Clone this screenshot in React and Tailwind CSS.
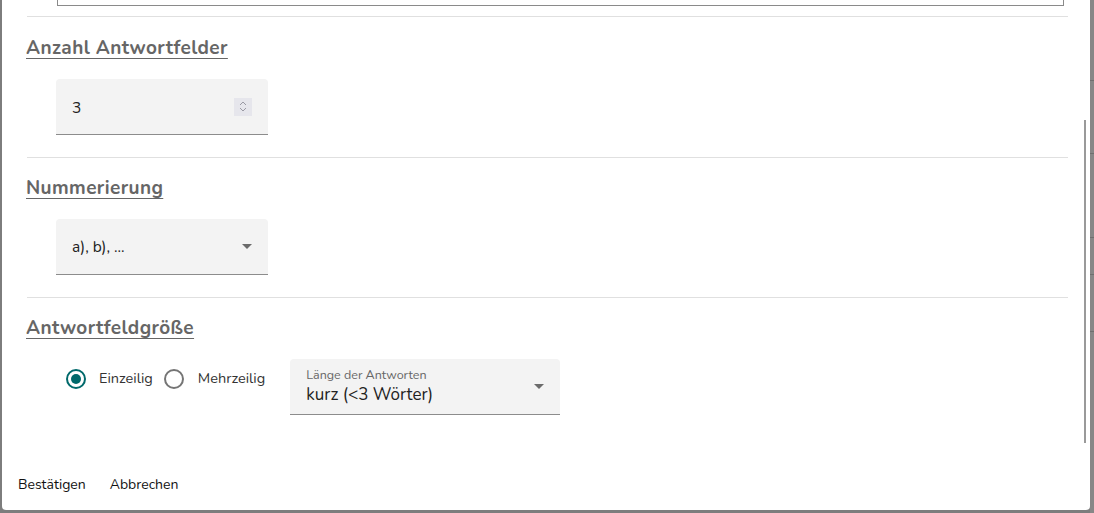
import React from "react";

const font = { fontFamily: "Nunito, Lato, 'Noto Sans', sans-serif" };

function Divider() {
  return <div className="ml-[25px] w-[1041px] h-px bg-[#e0e0e0]" />;
}

function Heading({ children }) {
  return (
    <div className="ml-[24px] text-[19px] tracking-[0.4px] font-bold text-[#666] underline underline-offset-[4px] decoration-[1px] leading-[24px]">
      {children}
    </div>
  );
}

function Caret() {
  return (
    <svg width="10" height="5" viewBox="0 0 10 5" className="block">
      <path d="M0 0 L10 0 L5 5 Z" fill="#6b6b6b" />
    </svg>
  );
}

export default function App() {
  return (
    <div className="w-[1094px] h-[513px] bg-[#7d7d7d] flex overflow-hidden" style={font}>
      <div className="w-[2px] shrink-0" />
      <div className="relative w-[1088px] h-[510px] bg-white rounded-b-[4px] flex flex-col shrink-0">
        {/* top of previous textbox */}
        <div className="ml-[55px] w-[1007px] h-[6px] border-x border-b border-[#8a8a8a]" />
        <div className="h-[10px]" />
        <Divider />
        <div className="h-[19px]" />
        <Heading>Anzahl Antwortfelder</Heading>
        <div className="h-[19px]" />
        <div className="ml-[54px] w-[212px] h-[56px] bg-[#f3f3f3] rounded-t-[4px] border-b border-[#8c8c8c] flex items-center pl-[16px] pr-[16px]">
          <span className="flex-1 text-[15.5px] text-[#222] pt-[2px]">3</span>
          <div className="w-[18px] h-[18px] bg-[#e6e6ec] flex flex-col items-center justify-center gap-[1px]">
            <svg width="8" height="5" viewBox="0 0 8 5"><path d="M1 4 L4 1 L7 4" fill="none" stroke="#9a9aa4" strokeWidth="1" /></svg>
            <svg width="8" height="5" viewBox="0 0 8 5"><path d="M1 1 L4 4 L7 1" fill="none" stroke="#9a9aa4" strokeWidth="1" /></svg>
          </div>
        </div>
        <div className="h-[22px]" />
        <Divider />
        <div className="h-[18px]" />
        <Heading>Nummerierung</Heading>
        <div className="h-[19px]" />
        <div className="ml-[54px] w-[212px] h-[56px] bg-[#f3f3f3] rounded-t-[4px] border-b border-[#8c8c8c] flex items-center pl-[16px] pr-[16px]">
          <span className="flex-1 text-[15.5px] text-[#222]">a), b), ...</span>
          <Caret />
        </div>
        <div className="h-[22px]" />
        <Divider />
        <div className="h-[18px]" />
        <Heading>Antwortfeldgröße</Heading>
        <div className="h-[19px]" />
        <div className="flex items-start">
          <div className="ml-[64px] mt-[10px] h-[20px] flex items-center">
            <div className="w-[20px] h-[20px] rounded-full border-2 border-[#00696b] flex items-center justify-center">
              <div className="w-[10px] h-[10px] rounded-full bg-[#00696b]" />
            </div>
            <span className="ml-[13px] text-[14.5px] text-[#333]">Einzeilig</span>
            <div className="ml-[11px] w-[20px] h-[20px] rounded-full border-2 border-[#757575]" />
            <span className="ml-[14px] text-[14.5px] text-[#333]">Mehrzeilig</span>
          </div>
          <div className="ml-[25px] w-[270px] h-[56px] bg-[#f3f3f3] rounded-t-[4px] border-b border-[#8c8c8c] flex items-center pl-[16px] pr-[16px]">
            <div className="flex-1 flex flex-col">
              <span className="text-[12.5px] text-[#666] leading-[14px]">Länge der Antworten</span>
              <span className="text-[17px] text-[#222] leading-[22px] mt-[2px]">kurz (&lt;3 Wörter)</span>
            </div>
            <Caret />
          </div>
        </div>
        <div className="flex-1" />
        <div className="flex items-center pb-[15px] pl-[16px] text-[14px] text-[#111]">
          <span>Bestätigen</span>
          <span className="ml-[24px]">Abbrechen</span>
        </div>
        {/* scrollbar */}
        <div className="absolute left-[1082px] top-[120px] w-[2px] h-[323px] bg-[#9a9a9a]" />
      </div>
      {/* sliver of page behind */}
      <div className="flex-1 flex flex-col bg-[#878787]">
        <div className="h-[80px]" />
        <div className="h-px bg-[#6f6f6f]" />
        <div className="h-[72px]" />
        <div className="h-px bg-[#6f6f6f]" />
        <div className="h-[83px]" />
        <div className="h-px bg-[#6f6f6f]" />
        <div className="h-[36px]" />
        <div className="h-px bg-[#6f6f6f]" />
        <div className="h-[56px]" />
        <div className="h-px bg-[#6f6f6f]" />
      </div>
    </div>
  );
}
